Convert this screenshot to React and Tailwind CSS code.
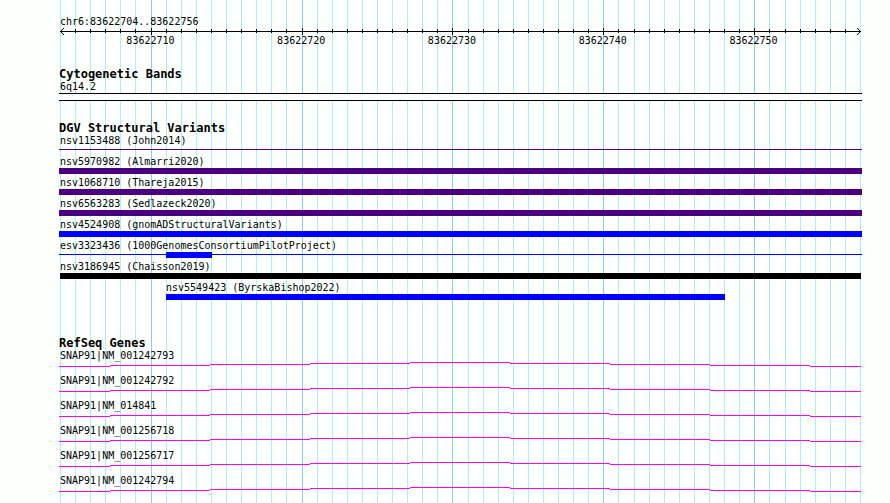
const VIEW_WIDTH = 803;
const INDIGO = "bg-[#4b0082]";
const BLUE = "bg-[#0000ff]";

// One tick per base, a major one every ten bases.
const ticks = Array.from({ length: 54 }, (_, i) => ({
  x: Math.floor(1.5 + i * 15.094),
  major: i % 10 === 6,
}));

const axisLabels = ["83622710", "83622720", "83622730", "83622740", "83622750"];

const variants = [
  { name: "nsv1153488 (John2014)", line: INDIGO },
  { name: "nsv5970982 (Almarri2020)", bar: INDIGO, start: 0, end: 803 },
  { name: "nsv1068710 (Thareja2015)", bar: INDIGO, start: 0, end: 803 },
  { name: "nsv6563283 (Sedlazeck2020)", bar: INDIGO, start: 0, end: 803 },
  { name: "nsv4524908 (gnomADStructuralVariants)", bar: BLUE, start: 0, end: 803 },
  { name: "esv3323436 (1000GenomesConsortiumPilotProject)", line: BLUE, bar: BLUE, start: 107, end: 153 },
  { name: "nsv3186945 (Chaisson2019)", bar: "bg-black", start: 1, end: 802 },
  { name: "nsv5549423 (ByrskaBishop2022)", bar: BLUE, start: 107, end: 666, indent: 106 },
];

const genes = [
  "SNAP91|NM_001242793",
  "SNAP91|NM_001242792",
  "SNAP91|NM_014841",
  "SNAP91|NM_001256718",
  "SNAP91|NM_001256717",
  "SNAP91|NM_001242794",
];

// Intron steps: [start, end, y]
const steps = [
  [0, 51, 4],
  [51, 151, 3],
  [151, 251, 2],
  [251, 351, 1],
  [351, 451, 0],
  [451, 551, 1],
  [551, 651, 2],
  [651, 751, 3],
  [751, 802, 4],
];

const percent = (n) => `${(n / VIEW_WIDTH) * 100}%`;

function GridLines() {
  return (
    <svg
      className="absolute inset-0 h-full w-full"
      viewBox="0 0 803 10"
      preserveAspectRatio="none"
      shapeRendering="crispEdges"
      aria-hidden="true"
    >
      {ticks.map((t) => (
        <rect key={t.x} x={t.x} y="0" width="1" height="10" fill={t.major ? "#87ceeb" : "#afeeee"} />
      ))}
    </svg>
  );
}

function Axis() {
  return (
    <svg
      className="block h-[7px] w-full"
      viewBox="0 0 803 7"
      preserveAspectRatio="none"
      shapeRendering="crispEdges"
      aria-hidden="true"
    >
      <rect x="1" y="3" width="801" height="1" />
      {ticks.slice(1, -1).map((t) => (
        <rect key={t.x} x={t.x} y={t.major ? 0 : 1} width="1" height={t.major ? 7 : 4} />
      ))}
      {[1, 2, 3].map((d) => (
        <g key={d}>
          <rect x={1 + d} y={3 - d} width="1" height="1" />
          <rect x={1 + d} y={3 + d} width="1" height="1" />
          <rect x={801 - d} y={3 - d} width="1" height="1" />
          <rect x={801 - d} y={3 + d} width="1" height="1" />
        </g>
      ))}
    </svg>
  );
}

function Heading({ children }) {
  return <h2 className="text-[12px] leading-[14px] font-bold whitespace-nowrap">{children}</h2>;
}

function Label({ indent = 0, children }) {
  return (
    <p className="pl-px whitespace-nowrap" style={{ marginLeft: percent(indent) }}>
      {children}
    </p>
  );
}

function Variant({ name, line, bar, start, end, indent }) {
  return (
    <li>
      <Label indent={indent}>{name}</Label>
      <div className="grid h-[6px]">
        {line && <div className={`col-start-1 row-start-1 mt-[2px] h-px ${line}`} />}
        {bar && (
          <div
            className={`col-start-1 row-start-1 h-[6px] ${bar}`}
            style={{ marginLeft: percent(start), width: percent(end - start) }}
          />
        )}
      </div>
    </li>
  );
}

function Gene({ name }) {
  return (
    <li>
      <Label>{name}</Label>
      <svg
        className="block h-[5px] w-full"
        viewBox="0 0 803 5"
        preserveAspectRatio="none"
        shapeRendering="crispEdges"
        aria-hidden="true"
      >
        {steps.map(([x1, x2, y]) => (
          <rect key={x1} x={x1} y={y} width={x2 - x1} height="1" fill="#ff00ff" />
        ))}
      </svg>
    </li>
  );
}

export default function App() {
  return (
    <main className="min-h-screen bg-[#fdfffc] pr-[28px] pl-[59px] font-['DejaVu_Sans_Mono',monospace] text-[10px] leading-[12px] text-black">
      <div className="relative min-h-screen">
        <GridLines />
        <div className="relative flex flex-col gap-5 pt-4">
          <section>
            <Label>chr6:83622704..83622756</Label>
            <Axis />
            <div className="grid grid-cols-[1fr_repeat(5,10fr)_2fr] pr-[3px] pl-px text-center">
              <span />
              {axisLabels.map((l) => (
                <span key={l}>{l}</span>
              ))}
            </div>
          </section>

          <section>
            <Heading>Cytogenetic Bands</Heading>
            <Label>6q14.2</Label>
            <div className="h-2 border-y border-black bg-[#fdfffc]" />
          </section>

          <section>
            <Heading>DGV Structural Variants</Heading>
            <ul className="flex flex-col gap-[3px]">
              {variants.map((v) => (
                <Variant key={v.name} {...v} />
              ))}
            </ul>
          </section>

          <section className="pt-4">
            <Heading>RefSeq Genes</Heading>
            <ul className="flex flex-col gap-2">
              {genes.map((g) => (
                <Gene key={g} name={g} />
              ))}
            </ul>
          </section>
        </div>
      </div>
    </main>
  );
}
